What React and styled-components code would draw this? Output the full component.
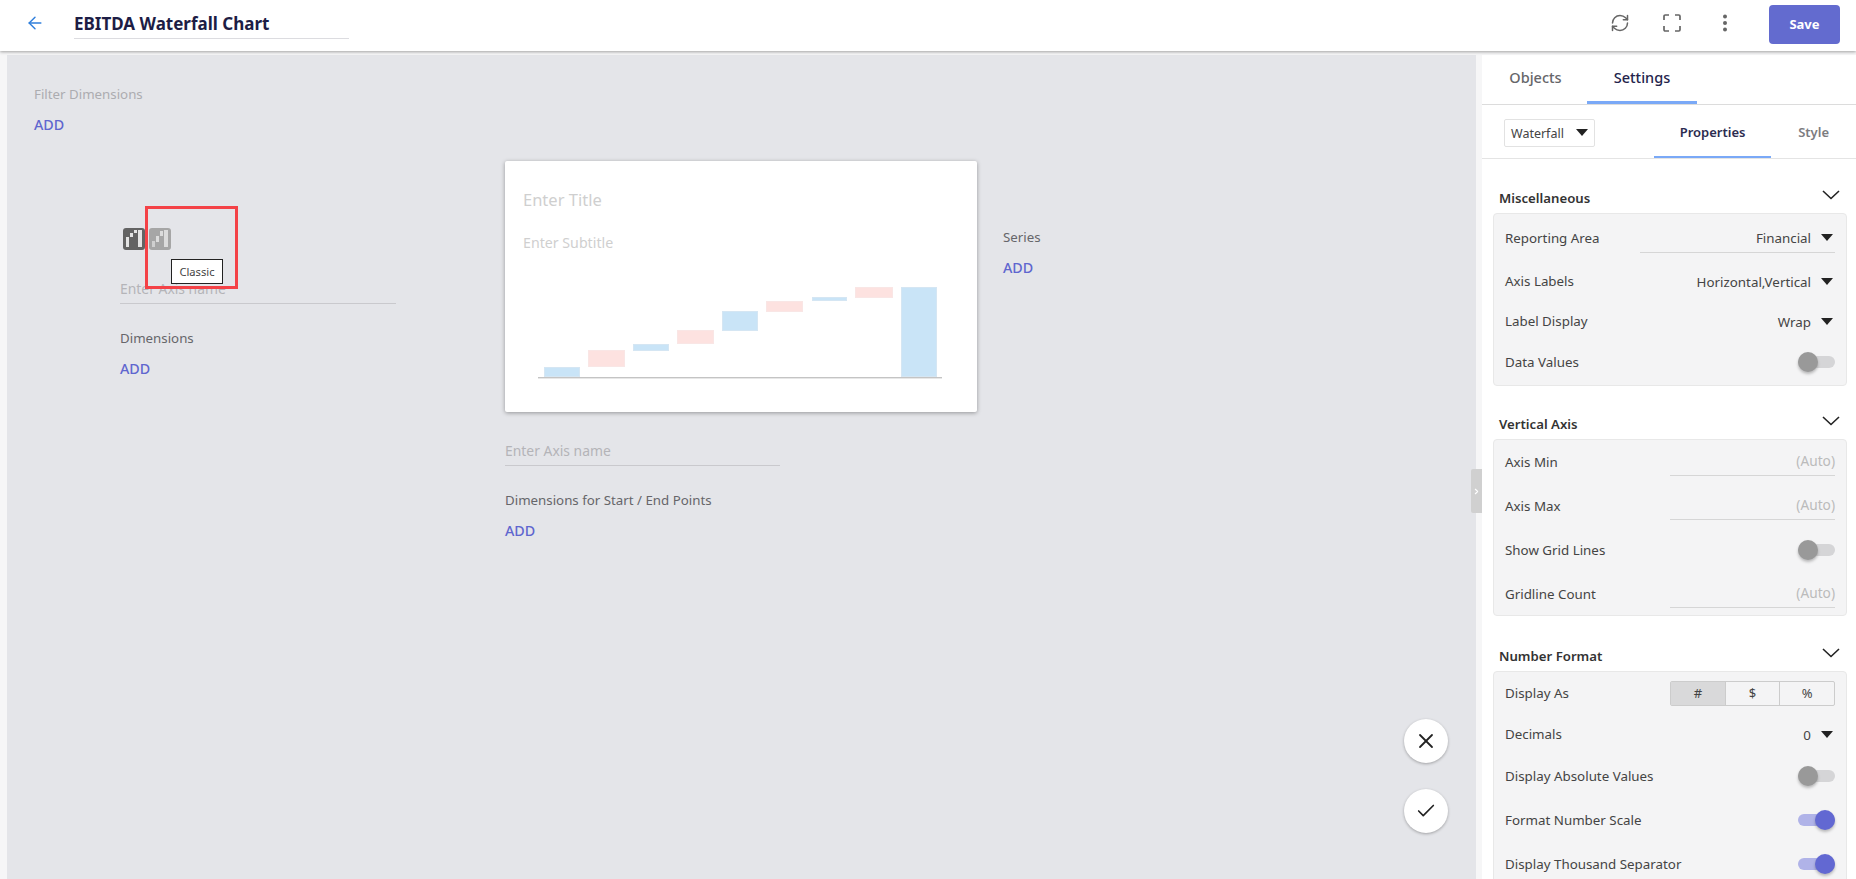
import React from 'react'
import styled, { createGlobalStyle } from 'styled-components'
import { ArrowLeft, RefreshCw, ChevronRight, X, Check } from 'lucide-react'

const GlobalStyle = createGlobalStyle`
html, body {
    margin: 0;
    height: 100%;
    overflow: hidden;
    font-family: "Noto Sans", "Open Sans", sans-serif;
    color: #333;
}
* { box-sizing: border-box; }
`;

const Page = styled.div`
height: 879px;
display: flex;
flex-direction: column;
background: #f6f6f7;
overflow: hidden;
`;
const Header = styled.header`
height: 51px;
flex-shrink: 0;
display: flex;
align-items: center;
background: #fff;
box-shadow: 0 1px 3px rgba(0,0,0,.35);
position: relative;
z-index: 2;
padding: 0 16px 6px 25px;
`;
const BackButton = styled.div`
width: 20px;
height: 20px;
color: #2f7fdc;
display: flex;
align-items: center;
justify-content: center;
margin-right: 29px;
`;
const TitleField = styled.div`
width: 275px;
height: 28px;
margin-top: 4px;
border-bottom: 1px solid #dcdce0;
font-size: 17px;
line-height: 26px;
font-weight: 700;
color: #1d1d45;
`;
const HeaderActions = styled.div`
margin-left: auto;
display: flex;
align-items: center;
`;
const IconSlot = styled.div`
width: 52.5px;
height: 24px;
display: flex;
align-items: center;
justify-content: center;
color: #666;
`;
const SaveButton = styled.button`
width: 71px;
height: 39px;
margin-left: 18px;
margin-top: 3px;
border: 0;
border-radius: 4px;
background: #636bcf;
color: #fff;
font: 700 13px "Noto Sans", sans-serif;
`;

const Body = styled.div`
flex: 1;
min-height: 0;
display: flex;
padding-top: 4px;
`;
const Canvas = styled.main`
width: 1469px;
margin-left: 7px;
background: #e4e5e9;
position: relative;
padding: 30px 0 0 27px;
`;
const FieldLabel = styled.div`
font-size: 13.3px;
line-height: 18px;
color: ${props => props.$muted ? '#acacb0' : '#66666a'};
`;
const AddLink = styled.div`
font-size: 14.3px;
line-height: 18px;
font-weight: 500;
color: #5f66cf;
margin-top: 13px;
`;
const CanvasRow = styled.div`
display: flex;
margin-top: 27px;
`;
const LeftColumn = styled.section`
width: 471px;
padding: 67px 0 0 86px;
position: relative;
`;
const TypeIcons = styled.div`
display: flex;
gap: 4px;
margin: 0 0 26px 3px;
`;
const TypeIcon = styled.svg`
display: block;
width: 22px;
height: 22px;
border-radius: 3px;
background: ${props => props.$active ? '#636363' : '#a6a6a6'};
`;
const AxisInput = styled.div`
width: ${props => props.$w || '276px'};
height: 28px;
border-bottom: 1px solid #c9c9cd;
color: #b4b4b8;
font-size: 13.9px;
line-height: 26px;
`;
const DimensionBlock = styled.div`
margin-top: 25px;
`;
const HighlightBox = styled.div`
position: absolute;
left: 111px;
top: 45px;
width: 93px;
height: 83px;
border: 3px solid #f44247;
pointer-events: none;
`;
const Tooltip = styled.div`
position: absolute;
left: 137px;
top: 98px;
width: 52px;
height: 25px;
background: #fff;
border: 1px solid #222;
font-size: 11.2px;
line-height: 23px;
text-align: center;
color: #444;
`;
const CenterColumn = styled.section`
width: 498px;
`;
const ChartCard = styled.div`
width: 472px;
height: 251px;
background: #fff;
border-radius: 2px;
box-shadow: 0 1px 4px rgba(0,0,0,.35);
padding: 27px 19px 0 18px;
margin-bottom: 26px;
`;
const CardTitle = styled.div`
font-size: 16.5px;
line-height: 24px;
color: #cfcfcf;
`;
const CardSubtitle = styled.div`
font-size: 14.2px;
line-height: 20px;
margin-top: 21px;
color: #cfcfcf;
`;
const ChartSvg = styled.svg`
display: block;
margin: 34px 0 0 15px;
`;
const RightColumn = styled.section`
padding-top: 67px;
`;
const Fab = styled.div`
position: absolute;
left: 1397px;
top: ${props => props.$top};
width: 44px;
height: 44px;
border-radius: 50%;
background: #fff;
box-shadow: 0 1px 3px rgba(0,0,0,.3);
display: flex;
align-items: center;
justify-content: center;
color: #222;
`;
const CollapseHandle = styled.div`
position: absolute;
left: 1471px;
top: 469px;
width: 11px;
height: 44px;
border-radius: 2px 0 0 2px;
background: #d0d0d0;
color: #fff;
display: flex;
align-items: center;
justify-content: center;
z-index: 1;
`;

const Panel = styled.aside`
margin-left: 6px;
flex: 1;
background: #fff;
overflow: hidden;
`;
const PanelTabs = styled.div`
height: 50px;
display: flex;
gap: 9px;
padding-left: 11px;
border-bottom: 1px solid #dcdcdc;
`;
const PanelTab = styled.div`
height: 49px;
width: ${props => props.$w};
display: flex;
align-items: center;
justify-content: center;
padding-bottom: 3px;
font-size: 14.5px;
font-weight: 500;
color: ${props => props.$active ? '#24244c' : '#66666a'};
border-bottom: 3px solid ${props => props.$active ? '#7aa9f7' : 'transparent'};
`;
const SubBar = styled.div`
height: 54px;
display: flex;
padding-left: 22px;
border-bottom: 1px solid #e4e4e4;
align-items: flex-end;
`;
const TypeSelect = styled.div`
width: 92px;
height: 28px;
margin-bottom: 11px;
margin-right: 59px;
border: 1px solid #e2e2e2;
border-radius: 2px;
display: flex;
align-items: center;
justify-content: space-between;
padding: 0 6px;
font-size: 12.5px;
color: #444;
`;
const SubTab = styled.div`
width: ${props => props.$w};
height: 52px;
display: flex;
align-items: center;
justify-content: center;
padding-top: 2px;
font-size: 13px;
font-weight: 600;
color: ${props => props.$active ? '#2c2c50' : '#7c7c7f'};
border-bottom: 2px solid ${props => props.$active ? '#7aa9f7' : 'transparent'};
`;
const SectionHead = styled.div`
height: ${props => props.$h};
display: flex;
align-items: flex-end;
justify-content: space-between;
padding: 0 16px 6px 17px;
font-size: 13.2px;
line-height: 18px;
font-weight: 600;
color: #333;
`;
const ExpandIcon = styled.svg`
margin-bottom: 7px;
`;
const SectionCard = styled.div`
margin: 0 9px 0 11px;
padding-top: ${props => props.$pt || '0'};
background: #f4f4f5;
border: 1px solid #e8e8e8;
border-radius: 4px;
`;
const Row = styled.div`
height: ${props => props.$h || '44px'};
display: flex;
align-items: center;
justify-content: space-between;
padding: 0 11px;
font-size: 13.35px;
color: #444;
`;
const SelectField = styled.div`
display: flex;
align-items: center;
justify-content: flex-end;
gap: 10px;
width: 195px;
height: 29px;
margin-top: 1px;
padding-right: 2px;
color: #444;
border-bottom: ${props => props.$line ? '1px solid #d6d6d6' : '0'};
`;
const Caret = styled.span`
width: 0;
height: 0;
margin-top: -1px;
border-left: 6px solid transparent;
border-right: 6px solid transparent;
border-top: 7px solid #222;
`;
const AutoField = styled.div`
width: 165px;
height: 28px;
text-align: right;
line-height: 26px;
font-size: 13.7px;
color: #bbb;
border-bottom: 1px solid #d6d6d6;
`;
const Toggle = styled.div`
width: 37px;
height: 12px;
border-radius: 6px;
background: ${props => props.$on ? '#b0b3e8' : '#d5d5d7'};
position: relative;
`;
const Thumb = styled.div`
position: absolute;
top: -4px;
left: ${props => props.$on ? '17px' : '0'};
width: 20px;
height: 20px;
border-radius: 50%;
background: ${props => props.$on ? '#6268d2' : '#999'};
box-shadow: 0 2px 3px rgba(0,0,0,.25);
`;
const Segments = styled.div`
display: flex;
width: 165px;
height: 25px;
border: 1px solid #ccc;
border-radius: 2px;
`;
const Segment = styled.div`
flex: 1;
display: flex;
align-items: center;
justify-content: center;
font-size: 13px;
color: #444;
background: ${props => props.$active ? '#d9d9da' : 'transparent'};
& + & { border-left: 1px solid #ccc; }
`;

const bars = [
    [6, 80, 36, 10, 'b'], [50, 63, 37, 17, 'p'], [95, 57, 36, 7, 'b'],
    [139, 43, 37, 14, 'p'], [184, 24, 36, 20, 'b'], [228, 14, 37, 11, 'p'],
    [274, 10, 35, 4, 'b'], [317, 0, 38, 11, 'p'], [363, 0, 36, 90, 'b'],
];

const WaterfallChart = () => (
    <ChartSvg width="404" height="92" viewBox="0 0 404 92">
        {bars.map(([x, y, w, h, c]) => (
            <rect key={x} x={x + .5} y={y + .5} width={w - 1} height={h - 1}
                fill={c === 'b' ? '#c9e4f7' : '#fde2e0'} stroke={c === 'b' ? '#d5e6f3' : '#f9e6e5'} />
        ))}
        <rect x="0" y="90" width="404" height="1.4" fill="#c4c4c4" />
    </ChartSvg>
);

const ClassicGlyph = () => (
    <TypeIcon $active viewBox="0 0 22 22">
        <g fill="#e4e4e4">
            <rect x="3" y="9" width="3" height="10" />
            <rect x="7" y="5" width="3" height="4" />
            <rect x="11" y="2" width="3" height="3" />
            <rect x="15" y="2" width="4" height="17" />
        </g>
    </TypeIcon>
);

const FloatingGlyph = () => (
    <TypeIcon viewBox="0 0 22 22">
        <g fill="#dcdcdc">
            <rect x="3" y="13" width="3" height="6" opacity=".75" />
            <rect x="7" y="8" width="3" height="6" />
            <rect x="11" y="3" width="3" height="5" />
            <rect x="15" y="2" width="4" height="17" />
        </g>
    </TypeIcon>
);

const FullscreenIcon = () => (
    <svg width="18" height="18" viewBox="0 0 18 18" fill="none" stroke="#666" strokeWidth="1.7">
        <path d="M1 6V2.200C1 1.500 1.500 1 2.200 1H6M12 1h3.800c.7 0 1.200.5 1.200 1.200V6M17 12v3.800c0 .7-.5 1.200-1.200 1.200H12M6 17H2.200C1.500 17 1 16.500 1 15.800V12" />
    </svg>
);

const DotsIcon = () => (
    <svg width="6" height="18" viewBox="0 0 6 18" fill="#666">
        <circle cx="3" cy="2.500" r="2" /><circle cx="3" cy="9" r="2" /><circle cx="3" cy="15.500" r="2" />
    </svg>
);

const Switch = ({ on }) => (
    <Toggle $on={on}><Thumb $on={on} /></Toggle>
);

const Section = ({ title, h, pt, children }) => (
    <>
        <SectionHead $h={h}>
            <span>{title}</span>
            <ExpandIcon width="18" height="10" viewBox="0 0 18 10" fill="none" stroke="#222" strokeWidth="1.6">
                <path d="M1 1l8 7.500L17 1" />
            </ExpandIcon>
        </SectionHead>
        <SectionCard $pt={pt}>{children}</SectionCard>
    </>
);

const App = () => {
    return (
        <Page>
            <GlobalStyle />
            <Header>
                <BackButton><ArrowLeft size={22} strokeWidth={1.7} /></BackButton>
                <TitleField>EBITDA Waterfall Chart</TitleField>
                <HeaderActions>
                    <IconSlot><RefreshCw size={20} strokeWidth={1.8} /></IconSlot>
                    <IconSlot><FullscreenIcon /></IconSlot>
                    <IconSlot><DotsIcon /></IconSlot>
                    <SaveButton>Save</SaveButton>
                </HeaderActions>
            </Header>
            <Body>
                <Canvas>
                    <FieldLabel $muted>Filter Dimensions</FieldLabel>
                    <AddLink>ADD</AddLink>
                    <CanvasRow>
                        <LeftColumn>
                            <TypeIcons>
                                <ClassicGlyph />
                                <FloatingGlyph />
                            </TypeIcons>
                            <AxisInput>Enter Axis name</AxisInput>
                            <DimensionBlock>
                                <FieldLabel>Dimensions</FieldLabel>
                                <AddLink>ADD</AddLink>
                            </DimensionBlock>
                            <HighlightBox />
                            <Tooltip>Classic</Tooltip>
                        </LeftColumn>
                        <CenterColumn>
                            <ChartCard>
                                <CardTitle>Enter Title</CardTitle>
                                <CardSubtitle>Enter Subtitle</CardSubtitle>
                                <WaterfallChart />
                            </ChartCard>
                            <AxisInput $w="275px">Enter Axis name</AxisInput>
                            <DimensionBlock>
                                <FieldLabel>Dimensions for Start / End Points</FieldLabel>
                                <AddLink>ADD</AddLink>
                            </DimensionBlock>
                        </CenterColumn>
                        <RightColumn>
                            <FieldLabel>Series</FieldLabel>
                            <AddLink>ADD</AddLink>
                        </RightColumn>
                    </CanvasRow>
                    <Fab $top="664px"><X size={24} strokeWidth={1.8} /></Fab>
                    <Fab $top="734px"><Check size={22} strokeWidth={1.8} /></Fab>
                </Canvas>
                <CollapseHandle><ChevronRight size={9} strokeWidth={3} /></CollapseHandle>
                <Panel>
                    <PanelTabs>
                        <PanelTab $w="85px">Objects</PanelTab>
                        <PanelTab $w="110px" $active>Settings</PanelTab>
                    </PanelTabs>
                    <SubBar>
                        <TypeSelect>Waterfall <Caret /></TypeSelect>
                        <SubTab $w="119px" $active>Properties</SubTab>
                        <SubTab $w="86px">Style</SubTab>
                    </SubBar>
                    <Section title="Miscellaneous" h="54px" pt="3px">
                        <Row $h="42px"><span>Reporting Area</span><SelectField $line>Financial <Caret /></SelectField></Row>
                        <Row $h="44px"><span>Axis Labels</span><SelectField>Horizontal,Vertical <Caret /></SelectField></Row>
                        <Row $h="36px"><span>Label Display</span><SelectField>Wrap <Caret /></SelectField></Row>
                        <Row $h="46px"><span>Data Values</span><Switch /></Row>
                    </Section>
                    <Section title="Vertical Axis" h="53px">
                        <Row><span>Axis Min</span><AutoField>(Auto)</AutoField></Row>
                        <Row><span>Axis Max</span><AutoField>(Auto)</AutoField></Row>
                        <Row><span>Show Grid Lines</span><Switch /></Row>
                        <Row $h="43px"><span>Gridline Count</span><AutoField>(Auto)</AutoField></Row>
                    </Section>
                    <Section title="Number Format" h="55px">
                        <Row $h="42px">
                            <span>Display As</span>
                            <Segments>
                                <Segment $active>#</Segment>
                                <Segment>$</Segment>
                                <Segment>%</Segment>
                            </Segments>
                        </Row>
                        <Row $h="40px"><span>Decimals</span><SelectField>0 <Caret /></SelectField></Row>
                        <Row $h="43px"><span>Display Absolute Values</span><Switch /></Row>
                        <Row $h="45px"><span>Format Number Scale</span><Switch on /></Row>
                        <Row><span>Display Thousand Separator</span><Switch on /></Row>
                    </Section>
                </Panel>
            </Body>
        </Page>
    )
}

export default App
